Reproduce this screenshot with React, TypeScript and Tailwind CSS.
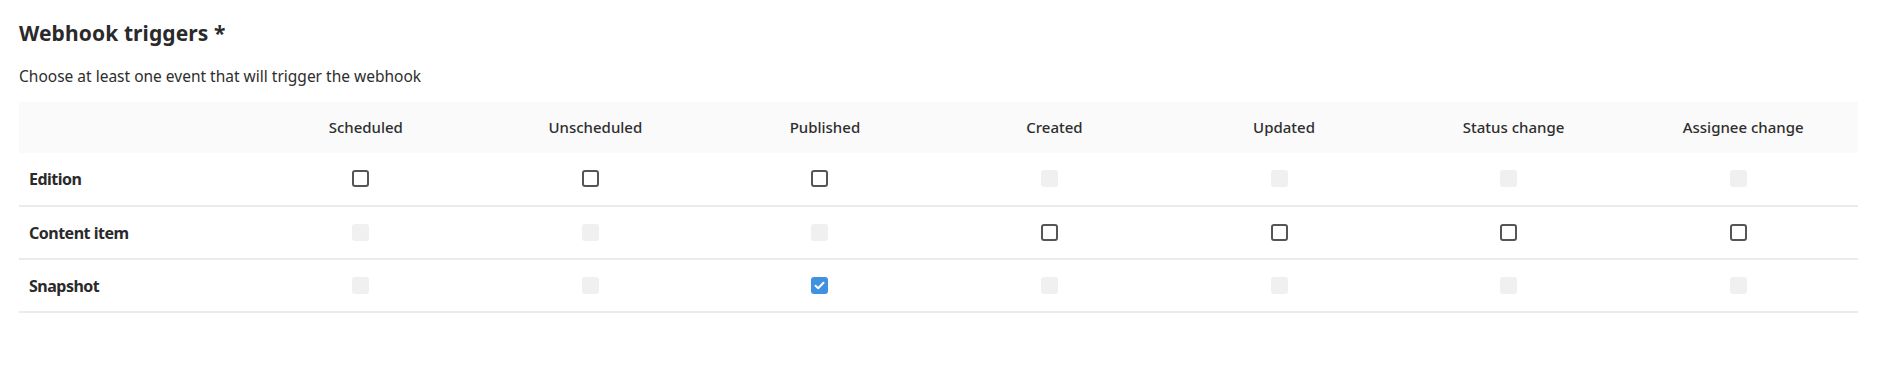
import React from "react";

type Cell = "on" | "off" | "disabled" | "checked";

const columns = [
  "Scheduled",
  "Unscheduled",
  "Published",
  "Created",
  "Updated",
  "Status change",
  "Assignee change",
];

const rows: { label: string; cells: Cell[] }[] = [
  { label: "Edition", cells: ["off", "off", "off", "disabled", "disabled", "disabled", "disabled"] },
  { label: "Content item", cells: ["disabled", "disabled", "disabled", "off", "off", "off", "off"] },
  { label: "Snapshot", cells: ["disabled", "disabled", "checked", "disabled", "disabled", "disabled", "disabled"] },
];

function Box({ state }: { state: Cell }) {
  if (state === "disabled") {
    return <span className="block w-[17px] h-[17px] rounded-[3px] bg-[#f0f0f0]" />;
  }
  if (state === "checked") {
    return (
      <span className="flex items-center justify-center w-[17px] h-[17px] rounded-[3px] bg-[#4191e1]">
        <svg width="11" height="9" viewBox="0 0 11 9" fill="none">
          <path d="M1.5 4.8 L4.2 7.3 L9.5 1.8" stroke="#fff" strokeWidth="2" strokeLinecap="round" strokeLinejoin="round" />
        </svg>
      </span>
    );
  }
  return <span className="block w-[17px] h-[17px] rounded-[3px] border-2 border-[#555555] bg-white" />;
}

export default function App() {
  return (
    <div className="bg-white w-[1880px] h-[378px] px-[19px] pt-[19px] text-[#2a2a2a]" style={{ fontFamily: "'Noto Sans', sans-serif" }}>
      <h2 className="text-[21px] leading-[28px] font-bold tracking-[0.1px]">Webhook triggers *</h2>
      <p className="mt-[18px] text-[15.5px] leading-[22px] text-[#2e2e2e]">Choose at least one event that will trigger the webhook</p>
      <table className="mt-[15px] w-[1839px] table-fixed border-collapse">
        <colgroup>
          <col className="w-[232px]" />
          {columns.map((c) => (
            <col key={c} />
          ))}
        </colgroup>
        <thead>
          <tr className="bg-[#fafafa] h-[51px]">
            <th />
            {columns.map((c) => (
              <th key={c} className="text-center text-[15px] font-medium text-[#2e2e2e]">
                {c}
              </th>
            ))}
          </tr>
        </thead>
        <tbody>
          {rows.map((r) => (
            <tr key={r.label} className="h-[53px] border-b-2 border-[#ebebeb]">
              <td className="pl-[10px] text-[16px] tracking-[-0.5px] font-bold text-[#2a2a2a]">{r.label}</td>
              {r.cells.map((s, i) => (
                <td key={i}>
                  <div className="flex justify-center pr-[10px] pb-[1px]">
                    <Box state={s} />
                  </div>
                </td>
              ))}
            </tr>
          ))}
        </tbody>
      </table>
    </div>
  );
}
